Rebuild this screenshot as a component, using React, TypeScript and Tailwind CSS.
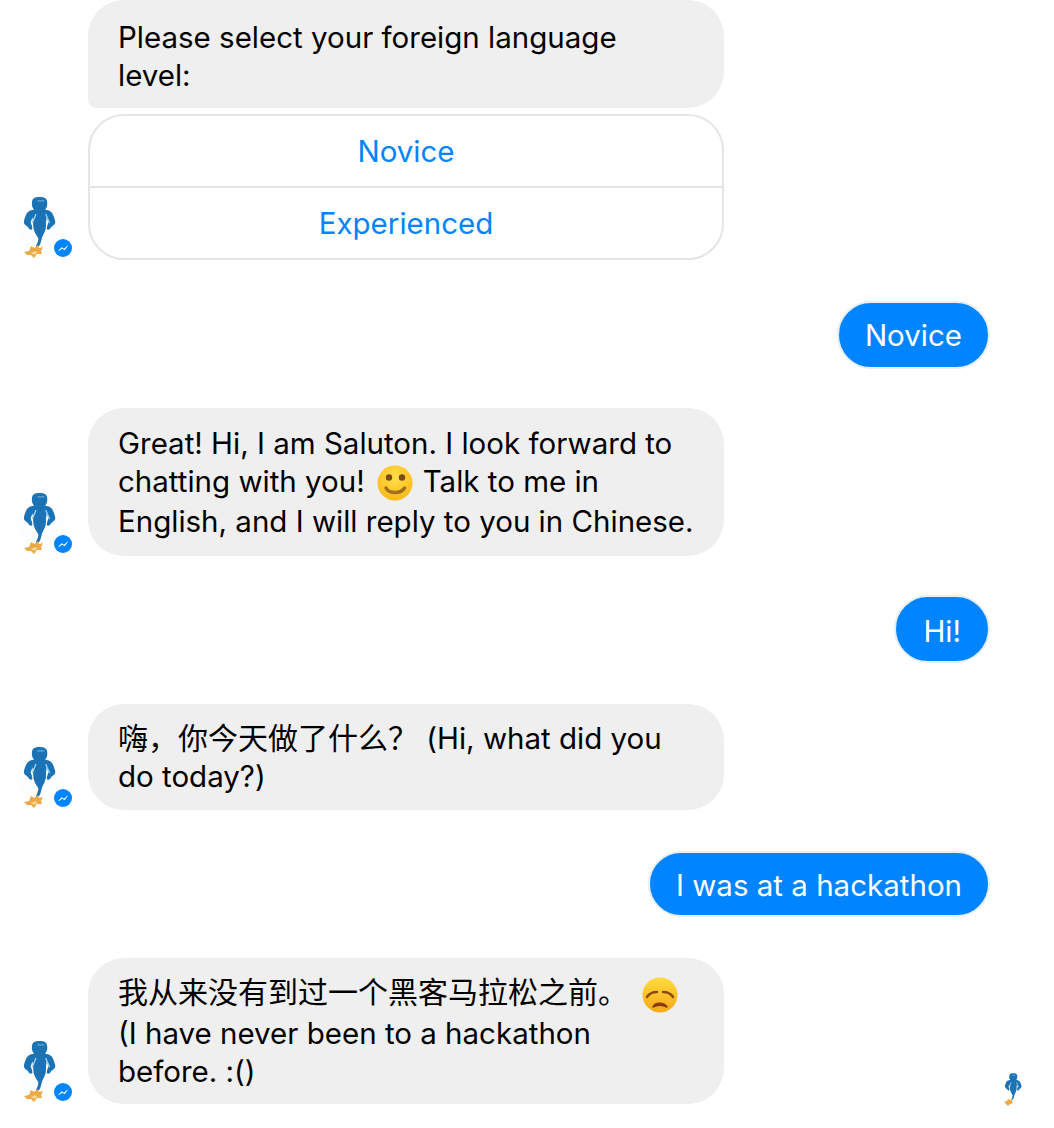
const sans = 'font-["Inter","Noto_Sans_CJK_SC",sans-serif]';

const Genie = () => (
  <g transform="translate(6 1) scale(0.85 0.98)">
    <path
      fill="#1b73b5"
      d="M41 2c3 0 6 1 7 3 1 3 1 7-2 10 3 0 6 1 8 3 2 3 4 7 4 10 0 2-3 3-5 5-1 2-3 3-5 2 0-3 1-5 2-7l-2-5c-1 3-1 6-1 9 0 5-4 9-5 13-1 2-1 5-3 7-1 1-3 1-4 0 2-2 3-5 3-8-3-4-6-8-6-13 0-3 0-5-1-8l-2 5c1 2 2 4 2 7-2 1-4 0-5-2-2-2-5-3-5-5 0-3 2-7 4-10 2-2 5-3 8-3-3-3-3-7-2-10 1-2 4-3 7-3z"
    />
    <path d="M35 20c-1 3-3 6-4 8M47 20c1 3 3 6 4 8" fill="none" stroke="#a9d3ee" strokeWidth="1.500" strokeLinecap="round" />
    <path d="M37 6h8" stroke="#5aa3d6" strokeWidth="1.500" />
  </g>
);

// genie with the messenger badge, drawn in a 88x66 box
const Avatar = () => (
  <svg viewBox="0 0 88 66" className="h-[66px] w-[88px] shrink-0">
    <g className="blur-[0.7px]">
      <circle cx="41" cy="34" r="24" fill="#fbfdff" />
      <Genie />
      <path d="M24 58l5-1 2-5 3 2 4-3 1 3 4-1-2 4 1 3-5 0-3 4-3-3-4 0z" fill="#eda945" />
      <path d="M31 59l4-2 3 2-4 2z" fill="#f7d58a" />
    </g>
    <circle cx="63" cy="54" r="9" fill="#0084ff" />
    <path d="M58.500 57l3.200-3.600 2.200 1.600 3.600-3-2.900 3.900-2.300-1.500z" fill="#fff" stroke="#fff" strokeWidth="0.5" />
  </svg>
);

const SmallGenie = () => (
  <svg viewBox="0 0 20 34" className="h-[34px] w-[20px]">
    <g className="blur-[0.4px]">
      <svg x="1" y="0" width="20" height="28" viewBox="22 2 38 50">
        <Genie />
      </svg>
      <path d="M1 30l3-1 1-2 2 1 2-1 0 2 1 2-3 1-2 2-2-2z" fill="#eda945" />
    </g>
  </svg>
);

const Smile = () => (
  <svg viewBox="0 0 36 36" className="ml-[12px] mr-[10px] -mt-[1px] inline-block h-[36px] w-[36px] align-middle">
    <defs>
      <radialGradient id="smile-face" cx="50%" cy="35%" r="65%">
        <stop offset="0%" stopColor="#ffe04a" />
        <stop offset="100%" stopColor="#f9b91a" />
      </radialGradient>
    </defs>
    <circle cx="18" cy="18" r="17.500" fill="url(#smile-face)" />
    <circle cx="12" cy="12.500" r="3.200" fill="#7c4a14" />
    <circle cx="25" cy="12.500" r="3.200" fill="#7c4a14" />
    <path d="M9 23c3 6 15 6 18.500 0" fill="none" stroke="#a5701c" strokeWidth="3.500" strokeLinecap="round" />
  </svg>
);

const Sad = () => (
  <svg viewBox="0 0 36 36" className="ml-[14px] mt-[1px] inline-block h-[36px] w-[36px] align-middle">
    <defs>
      <linearGradient id="sad-face" x1="0" y1="0" x2="0" y2="1">
        <stop offset="0%" stopColor="#ffdc3c" />
        <stop offset="100%" stopColor="#f7a81a" />
      </linearGradient>
    </defs>
    <circle cx="18" cy="18" r="17.500" fill="url(#sad-face)" />
    <path d="M5 20c2-3 6-5 10-5M31 20c-2-3-6-5-10-5" fill="none" stroke="#8a4a12" strokeWidth="2.500" strokeLinecap="round" />
    <path d="M11 30c2-5 11-5 14 0-4-2-10-2-14 0z" fill="#8a3a12" stroke="#8a3a12" strokeWidth="1.500" strokeLinejoin="round" />
  </svg>
);

const BotRow = ({ className, children }: { className?: string; children: React.ReactNode }) => (
  <div className={`flex items-end ${className ?? ''}`}>
    <Avatar />
    <div className="w-[636px]">{children}</div>
  </div>
);

const Bubble = ({ className, children }: { className?: string; children: React.ReactNode }) => (
  <div className={`rounded-[36px] bg-[#efefef] px-[30px] text-black ${className ?? ''}`}>{children}</div>
);

const UserRow = ({ className, children }: { className?: string; children: React.ReactNode }) => (
  <div className={`flex justify-end pr-[64px] ${className ?? ''}`}>
    <div className="rounded-[36px] border-2 border-[#e8eef5] bg-[#0084ff] px-[26px] text-white">{children}</div>
  </div>
);

export default function App() {
  return (
    <div className={`h-[1128px] w-[1054px] overflow-hidden bg-white text-[29.5px] leading-[38px] ${sans}`}>
      <BotRow>
        <Bubble className="rounded-bl-[8px] pb-[14px] pt-[18px]">
          Please select your foreign language
          <br />
          level:
        </Bubble>
        <div className="mt-[6px] overflow-hidden rounded-[36px] border-2 border-[#e5e5e5] text-center text-[#0084ff]">
          <div className="flex h-[72px] items-center justify-center border-b-2 border-[#e5e5e5]">Novice</div>
          <div className="flex h-[70px] items-center justify-center">Experienced</div>
        </div>
      </BotRow>

      <UserRow className="mt-[41px]">
        <div className="pb-[13px] pt-[13px]">Novice</div>
      </UserRow>

      <BotRow className="mt-[39px]">
        <Bubble className="h-[148px] pt-[16px]">
          <div>Great! Hi, I am Saluton. I look forward to</div>
          <div className="h-[38px] whitespace-nowrap">
            chatting with you!
            <Smile />
            Talk to me in
          </div>
          <div className="mt-[2px]">English, and I will reply to you in Chinese.</div>
        </Bubble>
      </BotRow>

      <UserRow className="mt-[39px]">
        <div className="px-[1px] pb-[11px] pt-[15px]">Hi!</div>
      </UserRow>

      <BotRow className="mt-[41px]">
        <Bubble className="h-[106px] pt-[15px]">
          <span className="text-[30px]">嗨，你今天做了什么？</span> (Hi, what did you
          <br />
          do today?)
        </Bubble>
      </BotRow>

      <UserRow className="mt-[41px]">
        <div className="pb-[11px] pt-[13px]">I was at a hackathon</div>
      </UserRow>

      <BotRow className="mt-[41px]">
        <Bubble className="h-[146px] pt-[15px]">
          <div className="h-[38px] whitespace-nowrap">
            <span className="text-[30px]">我从来没有到过一个黑客马拉松之前。</span>
            <Sad />
          </div>
          <div className="mt-[3px]">(I have never been to a hackathon</div>
          <div>before. :()</div>
        </Bubble>
      </BotRow>

      <div className="-mt-[32px] flex justify-end pr-[31px]">
        <SmallGenie />
      </div>
    </div>
  );
}
